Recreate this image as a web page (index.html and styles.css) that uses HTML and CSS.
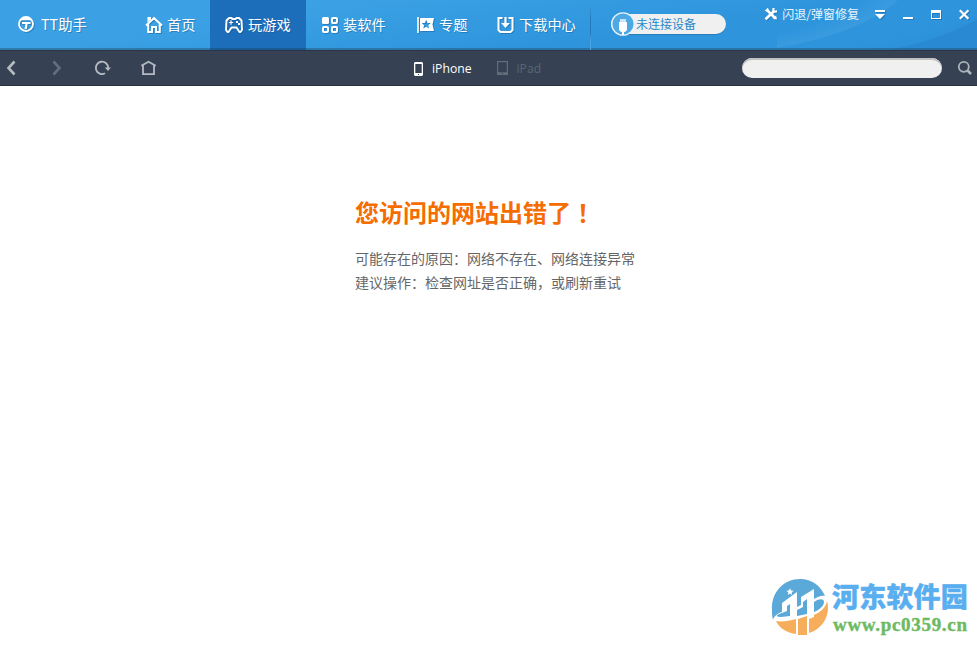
FILE: index.html
```html
<!DOCTYPE html>
<html lang="zh-CN">
  <head>
    <meta charset="UTF-8" />
    <meta name="viewport" content="width=device-width, initial-scale=1.0" />
    <title>TT助手</title>
    <link rel="stylesheet" href="styles.css">
  </head>

  <body>
    <header class="header">
      <div class="brand">
        <svg class="icon" width="18" height="18" viewBox="0 0 18 18">
          <circle cx="9" cy="9" r="7" fill="none" stroke="#fff" stroke-width="1.8" />
          <path d="M2 6.5 L6 3 H12 L16 6.5 L13 5.3 H5 Z" fill="#fff" />
          <path d="M5 7 H13.5 V9 H10.6 L9.8 14 H7.6 L8.4 9 H5 Z" fill="#fff" />
        </svg>
        <span>TT助手</span>
      </div>

      <nav class="nav">
        <a class="tab">
          <svg class="icon" width="18" height="18" viewBox="0 0 18 18">
            <path d="M1 9.5 L9 2 L17 9.5 M3.2 8 V16 H7 V11 H11 V16 H14.8 V8" fill="none" stroke="#fff" stroke-width="2" />
            <path d="M2.5 1 H6 V3.5 L2.5 6.5 Z" fill="#fff" />
          </svg>
          <span>首页</span>
        </a>
        <a class="tab active">
          <svg class="icon" width="18" height="18" viewBox="0 0 18 18">
            <path d="M4 2 H6.5 L7.5 3 H10.5 L11.5 2 H14 L16.5 4.5 L17 14 L15.5 16 H14.5 L11.5 11.5 H6.5 L3.5 16 H2.5 L1 14 L1.5 4.5 Z" fill="none" stroke="#fff" stroke-width="1.9" stroke-linejoin="round" />
            <path d="M3.8 6.5 H8.2 M6 4.3 V8.7" stroke="#fff" stroke-width="1.2" />
            <path d="M11 5 h2 v2 h-2 z M13 7 h2 v2 h-2 z" fill="#fff" />
          </svg>
          <span>玩游戏</span>
        </a>
        <a class="tab">
          <svg class="icon" width="18" height="18" viewBox="0 0 18 18">
            <rect x="1" y="1" width="7" height="7" rx="1.5" fill="#fff" />
            <g fill="none" stroke="#fff" stroke-width="2">
              <rect x="11" y="2" width="5" height="5" rx="1" />
              <rect x="2" y="11" width="5" height="5" rx="1" />
              <rect x="11" y="11" width="5" height="5" rx="1" />
            </g>
          </svg>
          <span>装软件</span>
        </a>
        <a class="tab tab-topic">
          <svg class="icon" width="18" height="18" viewBox="0 0 18 18">
            <path d="M.2 1 h1.6 v16 h-1.6 z" fill="#fff" />
            <path fill-rule="evenodd" d="M3 2 H17 L15.5 8.5 L17 15 H3 Z M9.2 3.8 L7.9 6.9 L4.7 7.1 L7.1 9.2 L6.3 12.5 L9.2 10.8 L12.1 12.5 L11.3 9.2 L13.7 7.1 L10.5 6.9 Z" fill="#fff" />
          </svg>
          <span>专题</span>
        </a>
        <a class="tab tab-download">
          <svg class="icon" width="18" height="18" viewBox="0 0 18 18">
            <path d="M5.5 2 H1.5 V14 L3.5 16 H13.5 L15.5 14 V2 H11.5" fill="none" stroke="#fff" stroke-width="2" />
            <path d="M7.4 1 h2.2 v6 h3.3 l-4.4 5 l-4.4 -5 h3.3 z" fill="#fff" />
          </svg>
          <span>下载中心</span>
        </a>
      </nav>

      <div class="device">
        <svg class="device-icon" width="24" height="24" viewBox="0 0 24 24">
          <circle cx="12" cy="12" r="11.2" fill="#4da9e4" stroke="#e6f3fc" stroke-width="1.3" />
          <path d="M9 7 h6 v3 h-6 z" fill="#c9e5f7" />
          <path d="M8 10 h8 v8 l-2 2 h-1 v3 h-2 v-3 h-1 l-2 -2 z" fill="#fff" />
        </svg>
        <span class="device-text">未连接设备</span>
      </div>

      <div class="tools">
        <a class="repair">
          <svg class="icon" width="14" height="14" viewBox="0 0 14 14">
            <path d="M3 3 L11.5 11.5" stroke="#fff" stroke-width="2.6" />
            <path d="M.8 3.8 L3.8 .8 L4.8 3 L3 4.8 Z M9.2 9.2 h3 l.8 3.3 l-3.3 -.4 z" fill="#fff" />
            <path d="M1.5 12.2 L9.5 4.8" stroke="#fff" stroke-width="2.6" />
            <path d="M9.6 1 L9.2 4.8 L13 4.4" fill="none" stroke="#fff" stroke-width="2.2" />
          </svg>
          <span>闪退/弹窗修复</span>
        </a>
        <svg class="icon menu" width="12" height="12" viewBox="0 0 12 12">
          <path d="M1 2 h10 v2 h-10 z M1 6 h10 l-5 5 z" fill="#fff" />
        </svg>
        <svg class="icon" width="12" height="12" viewBox="0 0 12 12">
          <path d="M1 9 h10 v2 h-10 z" fill="#fff" />
        </svg>
        <svg class="icon" width="12" height="12" viewBox="0 0 12 12">
          <path fill-rule="evenodd" d="M1 2 h10 v9 h-10 z M2 5 v5 h8 v-5 z" fill="#fff" />
        </svg>
        <svg class="icon" width="12" height="12" viewBox="0 0 12 12">
          <path d="M1.8 2.2 L10.4 10.8 M10.4 2.2 L1.8 10.8" stroke="#fff" stroke-width="2.2" />
        </svg>
      </div>
    </header>

    <div class="toolbar">
      <div class="history">
        <svg width="18" height="18" viewBox="0 0 18 18">
          <path d="M12.5 2.5 L6.5 9 L12.5 15.5" fill="none" stroke="#b5bac2" stroke-width="2.6" />
        </svg>
        <svg width="18" height="18" viewBox="0 0 18 18">
          <path d="M5.5 2.5 L11.5 9 L5.5 15.5" fill="none" stroke="#626d7d" stroke-width="2.6" />
        </svg>
        <svg width="18" height="18" viewBox="0 0 18 18">
          <path d="M11 14.3 A6.2 6.2 0 1 1 14.2 9" fill="none" stroke="#b5bac2" stroke-width="1.8" />
          <path d="M10.8 8.5 h6.2 l-3 3.6 z" fill="#b5bac2" />
        </svg>
        <svg width="18" height="18" viewBox="0 0 18 18">
          <path d="M1.3 6.8 L8.5 2.8 L15.7 6.8 M3 6 V15.2 H14 V6" fill="none" stroke="#b5bac2" stroke-width="1.8" />
        </svg>
      </div>

      <div class="platforms">
        <a class="platform selected">
          <svg width="10" height="14" viewBox="0 0 10 14">
            <path fill-rule="evenodd" d="M1 0 h7 l1 1 v12 l-1 1 h-7 l-1 -1 v-12 z M1.3 2 v9 h6.4 v-9 z M4 12 v1 h1 v-1 z" fill="#fff" />
          </svg>
          <span>iPhone</span>
        </a>
        <a class="platform">
          <svg width="12" height="14" viewBox="0 0 12 14">
            <path fill-rule="evenodd" d="M0 0 h11 v14 h-11 z M1.2 1.2 v10 h8.6 v-10 z M5 12 v1 h1 v-1 z" fill="#626d7a" />
          </svg>
          <span>iPad</span>
        </a>
      </div>

      <div class="search">
        <input class="search-input" type="text" />
        <svg width="16" height="16" viewBox="0 0 16 16">
          <circle cx="6.8" cy="6.8" r="5" fill="none" stroke="#adb3bc" stroke-width="1.8" />
          <path d="M10.5 10.5 L14 14" stroke="#adb3bc" stroke-width="2.6" />
        </svg>
      </div>
    </div>

    <main class="error">
      <h1>您访问的网站出错了<span class="mark">！</span></h1>
      <p>可能存在的原因：网络不存在、网络连接异常</p>
      <p>建议操作：检查网址是否正确，或刷新重试</p>
    </main>

    <div class="watermark">
      <svg width="58" height="58" viewBox="0 0 58 58">
        <path d="M1 32 C0 14 13 1 29 1 C41 1 50 8 54 18 C50 17 47 19 43 21 V11 L30 19 V27 L26 29 V14 L11 25 V34 C7 35 3 38 2 42 C1 38 1 35 1 32 Z" fill="#5ba9d9" />
        <path d="M16 28 L19 26 V38 L10 39 C6 39 5 38 7 36.5 L16 33 Z M43 24 C49 20 53 21 53 24 C53 28 48 32 43 34 Z M32 24 L36 21 V36 L26 38 V32 L32 29 Z" fill="#5ba9d9" />
        <path d="M56 23 C60 36 52 51 38 55 V41 L43 39 V37 C50 34 55 29 56 23 Z M5 43 C11 44 18 43 25 41 V56 C16 55 8 50 5 43 Z M27 41 L36 38 V57 H27 Z" fill="#f6ae5d" />
        <path d="M26 41 V57 M37 38 V57" stroke="#fff" stroke-width="1.4" />
        <path d="M19 10 l1 2.6 2.6 .2 -2 1.6 .6 2.6 -2.2 -1.5 -2.2 1.5 .6 -2.6 -2 -1.6 2.6 -.2 z" fill="#fff" />
      </svg>
      <div class="watermark-text">
        <div class="site-name">河东软件园</div>
        <div class="site-url">www.pc0359.cn</div>
      </div>
    </div>
  </body>
</html>
```

FILE: styles.css
```css
* {
  box-sizing: border-box;
}
body {
  margin: 0;
  height: 650px;
  overflow: hidden;
  background-color: #fff;
  font-family: "Noto Sans CJK SC", sans-serif;
  font-size: 14px;
}
svg {
  display: block;
  flex-shrink: 0;
}
.header {
  display: flex;
  height: 51px;
  color: #fff;
  background: linear-gradient(rgba(0, 0, 0, 0) 48px, rgba(30, 65, 90, 0.4) 48px, rgba(30, 65, 90, 0.4) 50px, #2b3544 50px),
    radial-gradient(ellipse 234px 100px at -47px -40px, rgba(20, 90, 170, 0) 88%, rgba(20, 90, 170, 0.06) 99%, rgba(20, 90, 170, 0.2) 100%) no-repeat right top / 140px 51px,
    radial-gradient(ellipse 220px 94px at -77px -40px, rgba(255, 255, 255, 0) 85%, rgba(255, 255, 255, 0.06) 99%, transparent 100%) no-repeat right top / 200px 51px,
    linear-gradient(172deg, #3ca1e4 25%, #2e95dd 65%);
}
.icon {
  filter: drop-shadow(1px 1px 0 rgba(20, 80, 130, 0.4));
}
.brand {
  display: flex;
  align-items: center;
  gap: 6px;
  width: 130px;
  height: 48px;
  padding-left: 17px;
  text-shadow: 1px 1px 0 rgba(20, 80, 130, 0.4);
}
.brand span {
  padding-bottom: 1px;
  font-size: 14.3px;
}
.nav {
  display: flex;
  height: 50px;
}
.tab {
  display: flex;
  align-items: center;
  gap: 4px;
  width: 80px;
  padding-left: 15px;
  white-space: nowrap;
  text-shadow: 1px 1px 0 rgba(20, 80, 130, 0.4);
}
.tab span {
  padding-bottom: 2px;
  font-size: 14.2px;
}
.tab:nth-child(2),
.tab:nth-child(3) {
  width: 96px;
}
.tab.active {
  gap: 5px;
  background: linear-gradient(#1d6eba 48px, #1a5a95 48px);
}
.tab-download {
  width: 109px;
  border-right: 1px solid;
  border-image: linear-gradient(rgba(30, 110, 175, 0) 10%, #2678b8 40%, #2678b8 65%, #4ba5e4 80%) 1;
}
.device {
  display: flex;
  align-items: center;
  width: 115px;
  height: 20px;
  margin: 14px 0 0 20px;
  border-radius: 10px;
  background-color: #f0f0f0;
  box-shadow: 0 1px 0 #2b7dba;
}
.device-text {
  margin-left: 1px;
  padding-bottom: 1px;
  color: #268acb;
  font-size: 12px;
}
.tools {
  display: flex;
  align-items: center;
  gap: 16px;
  height: 28px;
  margin-left: auto;
  padding-right: 7px;
}
.repair {
  display: flex;
  align-items: center;
  gap: 4px;
  margin-right: -1px;
  font-size: 12px;
  color: #e9f5fd;
}
.repair span {
  padding-bottom: 2px;
}
.toolbar {
  display: flex;
  align-items: center;
  height: 35px;
  background-color: #364253;
  border-bottom: 1px solid #29313e;
}
.history {
  display: flex;
  gap: 28px;
  width: 414px;
  padding-left: 2px;
}
.platforms {
  display: flex;
  gap: 25px;
}
.platform {
  display: flex;
  align-items: center;
  gap: 8px;
  color: #5b6674;
  font-family: "Open Sans", sans-serif;
  font-size: 12.2px;
}
.platform.selected {
  padding-top: 1px;
  color: #fff;
}
.search {
  display: flex;
  align-items: center;
  gap: 15px;
  margin-left: auto;
  padding-right: 4px;
}
.search-input {
  width: 200px;
  height: 20px;
  padding: 0 10px;
  border: none;
  border-radius: 10px;
  background-color: #f0f0f0;
  box-shadow: inset 0 2px 0 #c1c1c1;
}
.error {
  padding: 108px 0 0 355px;
}
.error h1 {
  margin: 0 0 16px;
  color: #f56c00;
  font-size: 24px;
  line-height: 36px;
}
.error .mark {
  margin-left: 6px;
}
.error p {
  margin: 0;
  color: #666;
  line-height: 24px;
}
.watermark {
  position: absolute;
  right: 9px;
  bottom: 14px;
  display: flex;
  gap: 3px;
}
.watermark-text {
  width: 136px;
  white-space: nowrap;
}
.site-name {
  color: #58aeee;
  font-size: 27px;
  font-weight: 900;
  line-height: 36px;
  letter-spacing: 0.2px;
  -webkit-text-stroke: 0.4px #58aeee;
}
.site-url {
  padding: 1px 0 0 1px;
  color: #6dba62;
  font-family: "Liberation Serif", serif;
  font-size: 19px;
  font-weight: bold;
  line-height: 20px;
  letter-spacing: 0.7px;
  -webkit-text-stroke: 0.4px #6dba62;
}
```
